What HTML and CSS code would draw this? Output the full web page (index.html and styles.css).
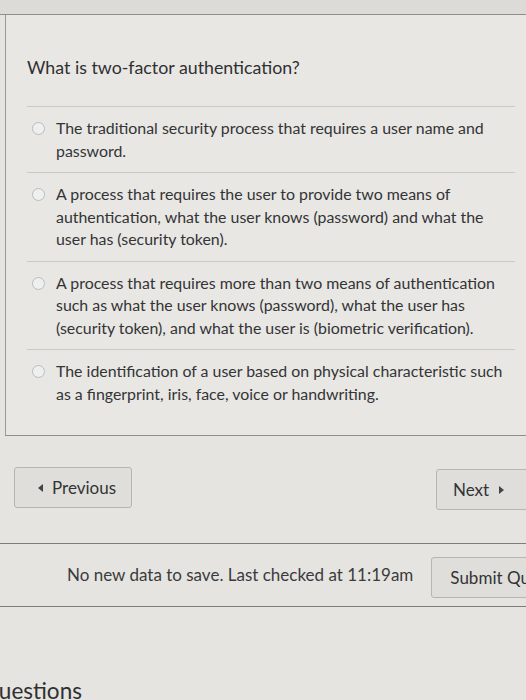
FILE: index.html
```html
<!DOCTYPE html>
<html lang="en">
<head>
<meta charset="utf-8">
<title>Quiz question</title>
<link rel="stylesheet" href="styles.css">
</head>
<body>
<div class="page">
  <div class="topband"></div>
  <section class="card">
    <h2 class="question">What is two-factor authentication?</h2>
    <div class="answers">
      <label class="answer"><span class="radio"></span><span class="atext">The traditional security process that requires a user name and password.</span></label>
      <label class="answer"><span class="radio"></span><span class="atext">A process that requires the user to provide two means of authentication, what the user knows (password) and what the user has (security token).</span></label>
      <label class="answer"><span class="radio"></span><span class="atext">A process that requires more than two means of authentication such as what the user knows (password), what the user has (security token), and what the user is (biometric verification).</span></label>
      <label class="answer"><span class="radio"></span><span class="atext">The identification of a user based on physical characteristic such as a fingerprint, iris, face, voice or handwriting.</span></label>
    </div>
  </section>
  <div class="nav">
    <button class="btn prev"><span class="tri tri-left"></span>Previous</button>
    <button class="btn next">Next<span class="tri tri-right"></span></button>
  </div>
  <div class="savebar">
    <span class="status">No new data to save. Last checked at 11:19am</span>
    <button class="btn submit">Submit Quiz</button>
  </div>
  <h3 class="qheading">Questions</h3>
</div>
</body>
</html>
```

FILE: styles.css
```css
html, body {
  margin: 0;
  padding: 0;
  overflow: hidden;
}
body {
  background: #e5e4e0;
  font-family: Lato, "Open Sans", "Liberation Sans", sans-serif;
  color: #333435;
  width: 526px;
  height: 700px;
}
.page {
  width: 600px;
}
.topband {
  height: 14px;
  background: #dcdbd8;
  border-bottom: 1px solid #8e8e8c;
}
.card {
  margin-left: 5px;
  border-left: 1px solid #9a9a98;
  border-bottom: 1px solid #8e8e8c;
  background: #e8e7e4;
  padding: 41px 0 20px 21px;
}
.question {
  margin: 0;
  font-size: 17.8px;
  font-weight: 400;
  line-height: 22px;
  color: #2f3031;
}
.answers {
  margin-top: 28px;
  width: 488px;
}
.answer {
  display: flex;
  align-items: flex-start;
  gap: 11px;
  border-top: 1px solid #c9c9c6;
  padding: 10px 0 10px 5px;
  font-size: 15.9px;
  line-height: 22.5px;
}
.radio {
  flex: none;
  width: 11px;
  height: 11px;
  margin-top: 5px;
  border-radius: 50%;
  border: 1px solid #b9bcbd;
  background: #eef0f0;
}
.atext {
  flex: 1;
}
.nav {
  display: flex;
  justify-content: space-between;
  align-items: flex-start;
  padding: 31px 0 33px 14px;
  border-bottom: 1px solid #7d7d7b;
  width: 560px;
  box-sizing: border-box;
}
.btn {
  font-family: Lato, "Open Sans", "Liberation Sans", sans-serif;
  font-size: 17px;
  color: #333435;
  background: #dfdedb;
  border: 1px solid #b5b5b2;
  border-radius: 3px;
  height: 41px;
  display: inline-flex;
  align-items: center;
  padding: 0;
  flex: none;
}
.prev {
  width: 118px;
  padding-left: 23px;
  gap: 9px;
}
.next {
  width: 124px;
  margin-top: 2px;
  padding-left: 16px;
  gap: 10px;
}
.tri {
  width: 0;
  height: 0;
  border-top: 4px solid transparent;
  border-bottom: 4px solid transparent;
}
.tri-left { border-right: 5px solid #444; }
.tri-right { border-left: 5px solid #444; }
.savebar {
  display: flex;
  align-items: center;
  gap: 18px;
  padding: 13px 0 8px 67px;
  border-bottom: 1px solid #7d7d7b;
  width: 600px;
  box-sizing: border-box;
}
.status {
  flex: none;
  white-space: nowrap;
  font-size: 17px;
  color: #3a3b3c;
  margin-top: -6px;
}
.submit {
  width: 130px;
  padding-left: 18px;
}
.qheading {
  margin: 70px 0 0 -19px;
  font-size: 22.5px;
  line-height: 27px;
  font-weight: 400;
  color: #2f3031;
}
```
